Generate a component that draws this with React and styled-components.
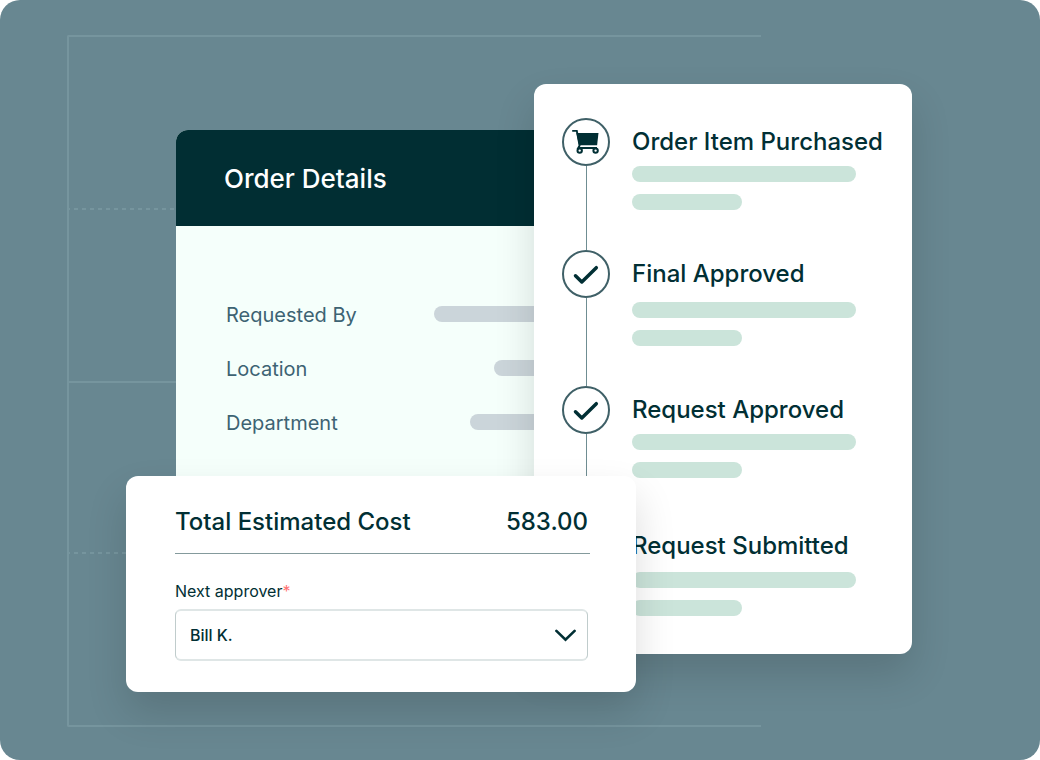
import React from "react";
import styled, { createGlobalStyle } from "styled-components";

const details = [
  { label: "Requested By", width: 180 },
  { label: "Location", width: 120 },
  { label: "Department", width: 144 },
];

const steps = [
  { title: "Order Item Purchased", icon: "cart", gap: 0, space: 40 },
  { title: "Final Approved", icon: "check", gap: 4, space: 40 },
  { title: "Request Approved", icon: "check", gap: 0, space: 44 },
  { title: "Request Submitted", gap: 2, space: 0 },
];

const CartIcon = () => (
  <svg width="44" height="44" viewBox="0 0 44 44" fill="none" aria-hidden="true">
    <path d="M8.2 10.9H12.8L15.6 25.6L14.2 28H33" stroke="#012f34" strokeWidth="1.9" />
    <path d="M12.4 13H34.5L33.1 25.3H15Z" fill="#012f34" />
    <circle cx="15.7" cy="30.6" r="2.2" stroke="#012f34" strokeWidth="2" />
    <circle cx="31.6" cy="30.6" r="2.2" stroke="#012f34" strokeWidth="2" />
  </svg>
);

const CheckIcon = () => (
  <svg width="44" height="44" viewBox="0 0 44 44" fill="none" aria-hidden="true">
    <path
      d="M11.5 23.8L17.8 29.9L32.3 15.7"
      stroke="#012f34"
      strokeWidth="3.5"
      strokeLinecap="round"
      strokeLinejoin="round"
    />
  </svg>
);

export default () => {
  return (
    <>
      <GlobalStyle />
      <Scene>
        <Backdrop>
          <DashedCell />
          <SolidCell />
          <DashedCell />
        </Backdrop>

        <Board>
          <DetailsCard>
            <DetailsHeader>Order Details</DetailsHeader>
            <DetailsList>
              {details.map((item) => (
                <DetailsRow key={item.label}>
                  <span>{item.label}</span>
                  <Bar $width={item.width} $color="#cbd5da" />
                </DetailsRow>
              ))}
            </DetailsList>
          </DetailsCard>

          <TimelineCard>
            {steps.map((step) => (
              <Step key={step.title}>
                <Track>
                  {step.icon && (
                    <>
                      <Marker>
                        {step.icon === "cart" ? <CartIcon /> : <CheckIcon />}
                      </Marker>
                      <Connector />
                    </>
                  )}
                </Track>
                <StepBody $gap={step.gap} $space={step.space}>
                  <StepTitle>{step.title}</StepTitle>
                  <Bars>
                    <Bar $width={224} $color="#cbe4da" />
                    <Bar $width={110} $color="#cbe4da" />
                  </Bars>
                </StepBody>
              </Step>
            ))}
          </TimelineCard>

          <CostCard>
            <CostHeader>
              <span>Total Estimated Cost</span>
              <span>583.00</span>
            </CostHeader>
            <Field>
              <Label htmlFor="approver">
                Next approver<Required>*</Required>
              </Label>
              <SelectBox>
                <Select id="approver" defaultValue="bill">
                  <option value="bill">Bill K.</option>
                </Select>
                <Chevron width="22" height="14" viewBox="0 0 22 14" fill="none" aria-hidden="true">
                  <path
                    d="M2.4 2.9L11.5 11.8L20.6 2.9"
                    stroke="#012f34"
                    strokeWidth="2.6"
                    strokeLinecap="round"
                  />
                </Chevron>
              </SelectBox>
            </Field>
          </CostCard>
        </Board>
      </Scene>
    </>
  );
};

const GlobalStyle = createGlobalStyle`
  * {
    box-sizing: border-box;
  }

  body {
    margin: 0;
    background: #fff;
    color: #012f34;
    font-family: "Inter", "Liberation Sans", sans-serif;
  }
`;

const Scene = styled.main`
  display: grid;
  grid-template-columns: minmax(0, 1fr);
  min-height: 100vh;
  border-radius: 20px;
  background: #688791;
  overflow: hidden;
`;

const Backdrop = styled.div`
  grid-area: 1 / 1;
  display: grid;
  grid-template-rows: 173fr 173fr 171fr 171fr;
  margin: 35px 279px 33px 67px;
  border: 2px solid #76959e;
  border-right: none;
  border-radius: 2px 0 0 2px;
`;

const SolidCell = styled.div`
  border-bottom: 2px solid #76959e;
`;

const DashedCell = styled.div`
  background: repeating-linear-gradient(
      90deg,
      #76959e 0 1px,
      transparent 1px 5px,
      #76959e 5px 8px
    )
    bottom / 100% 2px no-repeat;
`;

const Board = styled.div`
  grid-area: 1 / 1;
  display: grid;
  grid-template-columns: 50px minmax(0, 358fr) 102px minmax(0, 276fr);
  grid-template-rows: 46px minmax(346px, auto) minmax(178px, auto) 38px;
  align-content: start;
  padding: 84px 128px 68px 126px;
`;

const Card = styled.section`
  border-radius: 12px;
  background: #fff;
  box-shadow: 0 20px 40px rgba(0, 0, 0, 0.14);
`;

const DetailsCard = styled.section`
  grid-column: 2 / 4;
  grid-row: 2 / 4;
  border-radius: 12px;
  background: #f5fffb;
  overflow: hidden;
`;

const DetailsHeader = styled.h2`
  margin: 0;
  padding: 2px 48px 0;
  background: #012e33;
  color: #fff;
  font-size: 26px;
  font-weight: 500;
  line-height: 94px;
`;

const DetailsList = styled.div`
  display: grid;
  gap: 28px;
  padding: 75px 22px 0 50px;
`;

const DetailsRow = styled.div`
  display: flex;
  align-items: center;
  justify-content: space-between;
  color: #3d6373;
  font-size: 20px;
  line-height: 24px;

  span {
    padding-top: 2px;
  }
`;

const Bar = styled.div`
  width: ${({ $width }) => $width}px;
  height: 16px;
  border-radius: 8px;
  background: ${({ $color }) => $color};
`;

const TimelineCard = styled(Card)`
  grid-column: 3 / 5;
  grid-row: 1 / 4;
  padding: 34px 28px;
`;

const Step = styled.div`
  display: flex;
  gap: 22px;
`;

const Track = styled.div`
  display: flex;
  flex-direction: column;
  flex: 0 0 48px;
`;

const Marker = styled.div`
  width: 48px;
  height: 48px;
  border: 2px solid #3f6067;
  border-radius: 50%;

  svg {
    display: block;
  }
`;

const Connector = styled.div`
  flex: 1;
  margin-left: 24px;
  border-left: 1px solid #6f8d92;
`;

const StepBody = styled.div`
  display: grid;
  gap: ${({ $gap }) => $gap}px;
  padding-bottom: ${({ $space }) => $space}px;
`;

const StepTitle = styled.h3`
  margin: 0;
  font-size: 24px;
  font-weight: 500;
  line-height: 48px;
  white-space: nowrap;
`;

const Bars = styled.div`
  display: grid;
  gap: 12px;
`;

const CostCard = styled(Card)`
  grid-column: 1 / 4;
  grid-row: 3 / 5;
  padding: 14px 46px 30px 49px;
`;

const CostHeader = styled.div`
  display: flex;
  justify-content: space-between;
  padding-right: 2px;
  border-bottom: 1px solid #849a9c;
  font-size: 24px;
  font-weight: 500;
  line-height: 63px;
`;

const Field = styled.div`
  padding: 25px 2px 0 0;
`;

const Label = styled.label`
  display: block;
  font-size: 16px;
  line-height: 24px;
  margin-bottom: 6px;
`;

const Required = styled.span`
  color: #ff7373;
`;

const SelectBox = styled.div`
  display: grid;
  align-items: center;
`;

const Select = styled.select`
  grid-area: 1 / 1;
  appearance: none;
  width: 100%;
  height: 52px;
  padding: 0 14px;
  border: solid #c0cccc;
  border-width: 2px 1px;
  border-top-color: #dfe6e6;
  border-bottom-color: #dfe6e6;
  border-radius: 6px;
  background: #fff;
  color: #012f34;
  font-family: inherit;
  font-size: 16px;
  font-weight: 500;
`;

const Chevron = styled.svg`
  grid-area: 1 / 1;
  justify-self: end;
  margin-right: 12px;
  pointer-events: none;
`;
